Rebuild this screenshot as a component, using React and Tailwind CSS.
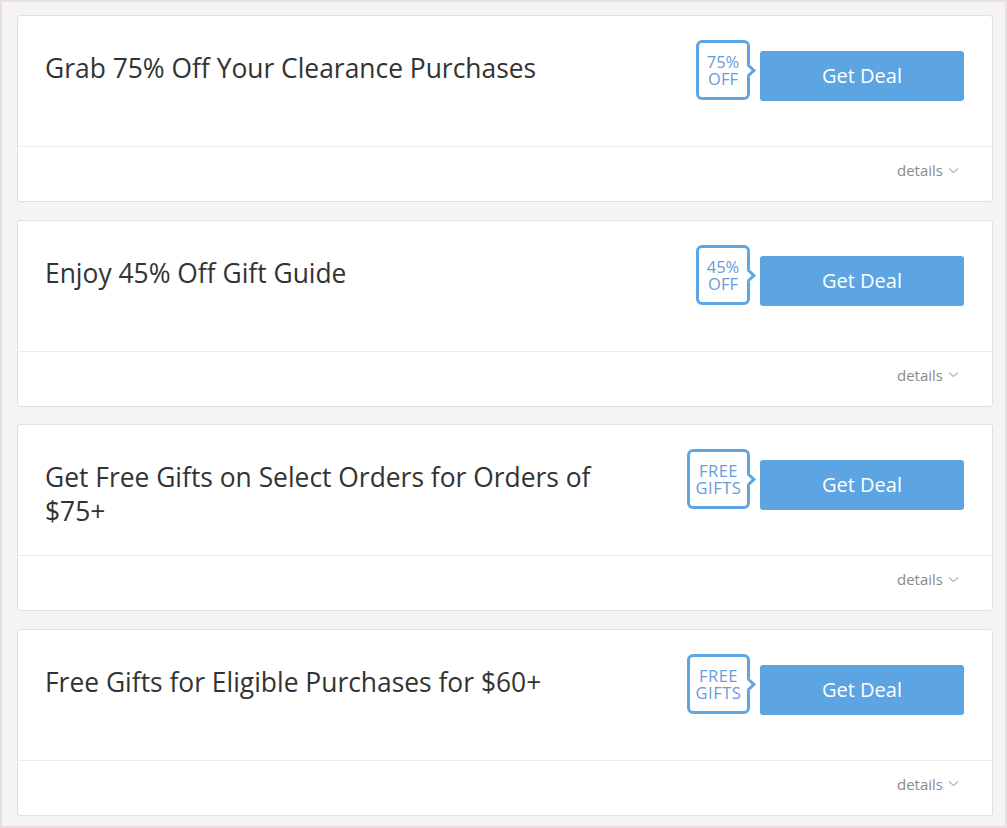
import React from 'react';

const deals = [
  { title: 'Grab 75% Off Your Clearance Purchases', badge: ['75%', 'OFF'], wide: false },
  { title: 'Enjoy 45% Off Gift Guide', badge: ['45%', 'OFF'], wide: false },
  { title: 'Get Free Gifts on Select Orders for Orders of $75+', badge: ['FREE', 'GIFTS'], wide: true },
  { title: 'Free Gifts for Eligible Purchases for $60+', badge: ['FREE', 'GIFTS'], wide: true },
];

export default function App() {
  return (
    <div
      className="w-[1007px] h-[828px] border-2 border-[#ecdede] bg-[#f4f4f4] pt-[13px] pl-[15px] pr-[12px] flex flex-col gap-[17.5px] overflow-hidden"
      style={{ fontFamily: '"Open Sans", "Liberation Sans", sans-serif' }}
    >
      {deals.map((deal, idx) => (
        <DealCard key={idx} {...deal} />
      ))}
    </div>
  );
}

function DealCard({ title, badge, wide }) {
  return (
    <div className="bg-white border border-[#e1e1e1] rounded-[3px] shrink-0">
      <div className="h-[130px] flex justify-between pl-[27px] pr-[28px]">
        <h3 className="pt-[35px] w-[580px] text-[26.4px] leading-[34px] text-[#333]">{title}</h3>
        <div className="flex items-start pt-[24px] gap-[10px]">
          <div
            className={`relative h-[60px] ${wide ? 'w-[63px] tracking-[0.5px]' : 'w-[54px]'} border-[3px] border-[#5ea6e3] rounded-[6px] flex flex-col items-center justify-center text-[#6a9bd9] text-[16.5px] leading-[17px]`}
          >
            <span>{badge[0]}</span>
            <span>{badge[1]}</span>
            <div className="absolute right-[-7px] top-[23px] w-[9px] h-[9px] rotate-45 bg-white border-t-[3px] border-r-[3px] border-[#5ea6e3]" />
          </div>
          <button className="mt-[11px] w-[204px] h-[50px] bg-[#5ca5e2] rounded-[3px] text-white text-[20px]">
            Get Deal
          </button>
        </div>
      </div>
      <div className="h-[55px] border-t border-[#ececec] flex justify-end items-start pt-[13px] pr-[33px]">
        <span className="flex items-center gap-[5px] text-[15px] leading-[20px] text-[#8a8a8a]">
          details
          <svg width="11" height="7" viewBox="0 0 11 7" fill="none" stroke="#b5b5b5" strokeWidth="1.2">
            <path d="M1 1.5l4.5 4 4.5-4" />
          </svg>
        </span>
      </div>
    </div>
  );
}
